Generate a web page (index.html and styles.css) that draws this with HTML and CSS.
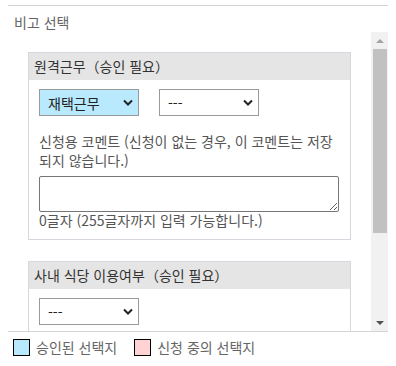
FILE: index.html
```html
<!DOCTYPE html>
<html lang="ko">
<head>
    <meta charset="UTF-8">
    <title>비고 선택</title>
    <link rel="stylesheet" href="styles.css">
</head>
<body>

<div class="divider"></div>
<div class="section-title">비고 선택</div>

<div class="scroll-box">
    <div class="scroll-content">
        <div class="card">
            <div class="card-header">원격근무（승인 필요）</div>
            <div class="card-body">
                <div class="select-row">
                    <div class="select-wrap approved">
                        <select class="choice">
                            <option>재택근무</option>
                        </select>
                        <svg class="chevron" width="10" height="7" viewBox="0 0 10 7"><path d="M1 1.5 L5 5.5 L9 1.5" fill="none" stroke="#222" stroke-width="2"/></svg>
                    </div>
                    <div class="select-wrap">
                        <select class="choice">
                            <option>---</option>
                        </select>
                        <svg class="chevron" width="10" height="7" viewBox="0 0 10 7"><path d="M1 1.5 L5 5.5 L9 1.5" fill="none" stroke="#222" stroke-width="2"/></svg>
                    </div>
                </div>
                <p class="comment-label">신청용 코멘트 (신청이 없는 경우, 이 코멘트는 저장되지 않습니다.)</p>
                <textarea class="comment"></textarea>
                <div class="counter">0글자 (255글자까지 입력 가능합니다.)</div>
            </div>
        </div>

        <div class="card">
            <div class="card-header">사내 식당 이용여부（승인 필요）</div>
            <div class="card-body tall">
                <div class="select-row">
                    <div class="select-wrap">
                        <select class="choice">
                            <option>---</option>
                        </select>
                        <svg class="chevron" width="10" height="7" viewBox="0 0 10 7"><path d="M1 1.5 L5 5.5 L9 1.5" fill="none" stroke="#222" stroke-width="2"/></svg>
                    </div>
                </div>
            </div>
        </div>
    </div>

    <div class="scrollbar">
        <div class="scroll-btn">
            <svg width="8" height="4" viewBox="0 0 8 4"><path d="M0 4 L4 0 L8 4 Z" fill="#a3a3a3"/></svg>
        </div>
        <div class="scroll-track">
            <div class="scroll-thumb"></div>
        </div>
        <div class="scroll-btn">
            <svg width="8" height="4" viewBox="0 0 8 4"><path d="M0 0 L8 0 L4 4 Z" fill="#505050"/></svg>
        </div>
    </div>
</div>

<div class="legend">
    <span class="swatch approved"></span>
    <span class="legend-text">승인된 선택지</span>
    <span class="swatch pending"></span>
    <span class="legend-text">신청 중의 선택지</span>
</div>

</body>
</html>
```

FILE: styles.css
```css
body {
    font-family: "Noto Sans CJK KR", "Liberation Sans", sans-serif;
    font-size: 14px;
    margin: 5px 8px 0;
    color: #333;
    background: #fff;
}
.divider {
    border-top: 1px solid #d4d4d4;
}
.section-title {
    color: #666;
    line-height: 19px;
    padding: 7px 0 0 6px;
    height: 19px;
}
.scroll-box {
    display: flex;
    height: 299px;
    overflow: hidden;
    border-bottom: 1px solid #d4d4d4;
}
.scroll-content {
    flex: 1;
    overflow: hidden;
}
.scrollbar {
    width: 17px;
    display: flex;
    flex-direction: column;
    background: #f1f1f1;
}
.scroll-btn {
    height: 17px;
    display: flex;
    align-items: center;
    justify-content: center;
}
.scroll-track {
    flex: 1;
}
.scroll-thumb {
    height: 184px;
    margin: 0 1px 0 2px;
    background: #c1c1c1;
}
.card {
    margin: 20px 20px 21px;
    border: 1px solid #d5d8de;
}
.card-header {
    background: #e5e5e5;
    height: 27px;
    line-height: 27px;
    padding: 0 5px;
    color: #333;
}
.card-body {
    padding: 9px 10px 10px;
}
.card-body.tall {
    min-height: 60px;
}
.select-row {
    display: flex;
    gap: 20px;
}
.select-wrap {
    position: relative;
    width: 100px;
    height: 27px;
    background: #fff;
}
.select-wrap.approved {
    background: #b9e9fd;
}
.choice {
    appearance: none;
    -webkit-appearance: none;
    width: 100%;
    height: 100%;
    margin: 0;
    border: 1px solid #9a9a9a;
    border-radius: 0;
    background: transparent;
    font-family: inherit;
    font-size: 14px;
    color: #222;
    padding: 0 0 0 8px;
}
.chevron {
    position: absolute;
    right: 6px;
    top: 10px;
    pointer-events: none;
}
.comment-label {
    margin: 16px 0 6px;
    line-height: 19px;
    color: #555;
}
.comment {
    display: block;
    box-sizing: border-box;
    width: 300px;
    height: 36px;
    margin: 0;
    border: 1px solid #767676;
    border-radius: 2px;
    resize: vertical;
}
.counter {
    color: #555;
    line-height: 17px;
}
.legend {
    display: flex;
    align-items: center;
    padding: 6px 0 0 5px;
    color: #666;
    line-height: 19px;
}
.swatch {
    box-sizing: border-box;
    width: 17px;
    height: 17px;
    border: 1px solid #000;
    margin-right: 6px;
}
.swatch.approved {
    background: #b9e9fd;
}
.swatch.pending {
    background: #ffd3d3;
    margin-left: 17px;
}
```
